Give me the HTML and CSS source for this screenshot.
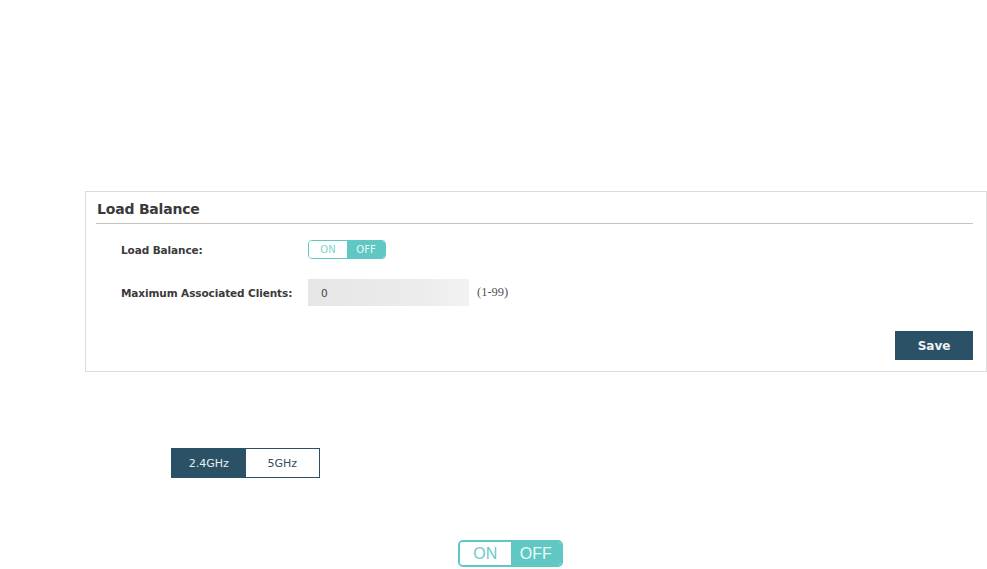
FILE: index.html
```html
<!DOCTYPE html>
<html>
<head>
<meta charset="utf-8">
<link rel="stylesheet" href="styles.css">
</head>
<body>
<div class="page">
  <section class="panel">
    <h2 class="panel-title">Load Balance</h2>
    <div class="form">
      <div class="row row-toggle">
        <span class="label">Load Balance:</span>
        <div class="toggle small">
          <span class="opt">ON</span>
          <span class="opt active">OFF</span>
        </div>
      </div>
      <div class="row row-input">
        <span class="label">Maximum Associated Clients:</span>
        <div class="input">0</div>
        <span class="hint">(1-99)</span>
      </div>
    </div>
    <div class="actions">
      <button class="btn-save">Save</button>
    </div>
  </section>
  <div class="tabs">
    <span class="tab active">2.4GHz</span>
    <span class="tab">5GHz</span>
  </div>
  <div class="big-wrap">
    <div class="toggle big">
      <span class="opt">ON</span>
      <span class="opt active">OFF</span>
    </div>
  </div>
</div>
</body>
</html>
```
FILE: styles.css
```css
html, body {
  margin: 0;
  padding: 0;
  background: #ffffff;
}
body {
  font-family: "DejaVu Sans", Verdana, sans-serif;
  color: #333;
}
.page {
  width: 987px;
  height: 569px;
  overflow: hidden;
  padding-top: 191px;
  padding-left: 85px;
  box-sizing: border-box;
}
.panel {
  width: 902px;
  height: 181px;
  box-sizing: border-box;
  border: 1px solid #dcdcdc;
  padding: 8px 13px 0 10px;
}
.panel-title {
  margin: 0;
  font-size: 14px;
  font-weight: bold;
  color: #3a3a3a;
  line-height: 18px;
  padding-left: 1px;
  padding-bottom: 5px;
  border-bottom: 1px solid #c9c3bd;
  letter-spacing: -0.2px;
}
.form {
  padding-left: 25px;
}
.row {
  display: flex;
  align-items: center;
}
.row-toggle {
  margin-top: 16px;
  height: 19px;
}
.row-input {
  margin-top: 20px;
  height: 27px;
}
.label {
  width: 187px;
  font-size: 10.5px;
  font-weight: bold;
  color: #3a3a3a;
  letter-spacing: -0.1px;
}
.toggle {
  display: flex;
  box-sizing: border-box;
  border: 1px solid #5fc8c3;
  overflow: hidden;
}
.toggle .opt {
  flex: 1;
  display: flex;
  align-items: center;
  justify-content: center;
  color: #7fd2ce;
  background: #fff;
}
.toggle .opt.active {
  background: #5fc8c3;
  color: #eaf8f7;
}
.toggle.small {
  width: 78px;
  height: 19px;
  border-radius: 4px;
  font-size: 10px;
}
.input {
  width: 161px;
  height: 27px;
  box-sizing: border-box;
  background: linear-gradient(90deg, #e6e6e6 0%, #ececec 70%, #f2f2f2 100%);
  font-size: 10.5px;
  color: #444;
  padding-left: 13px;
  display: flex;
  align-items: center;
}
.hint {
  margin-left: 8px;
  font-family: "Liberation Serif", serif;
  font-size: 12.5px;
  color: #555;
}
.actions {
  display: flex;
  justify-content: flex-end;
  margin-top: 25px;
}
.btn-save {
  width: 78px;
  height: 29px;
  border: none;
  background: #2a5166;
  color: #eef2f4;
  font-family: "DejaVu Sans", Verdana, sans-serif;
  font-size: 12px;
  font-weight: bold;
  padding: 0;
}
.tabs {
  display: flex;
  margin-top: 76px;
  margin-left: 86px;
  width: 149px;
  height: 30px;
  box-sizing: border-box;
  border: 1px solid #2a5166;
}
.tab {
  flex: 1;
  display: flex;
  align-items: center;
  justify-content: center;
  font-size: 11px;
  color: #2f4f60;
  background: #fff;
}
.tab.active {
  background: #2a5166;
  color: #e8eef1;
}
.big-wrap {
  margin-top: 62px;
  margin-left: 373px;
}
.toggle.big {
  width: 105px;
  height: 27px;
  border-radius: 5px;
  border-width: 2px;
  font-family: "Liberation Sans", Arial, sans-serif;
  font-size: 16px;
}
.toggle.big .opt {
  color: #6ccbc6;
}
.toggle.big .opt.active {
  color: #f0fbfa;
}
```
